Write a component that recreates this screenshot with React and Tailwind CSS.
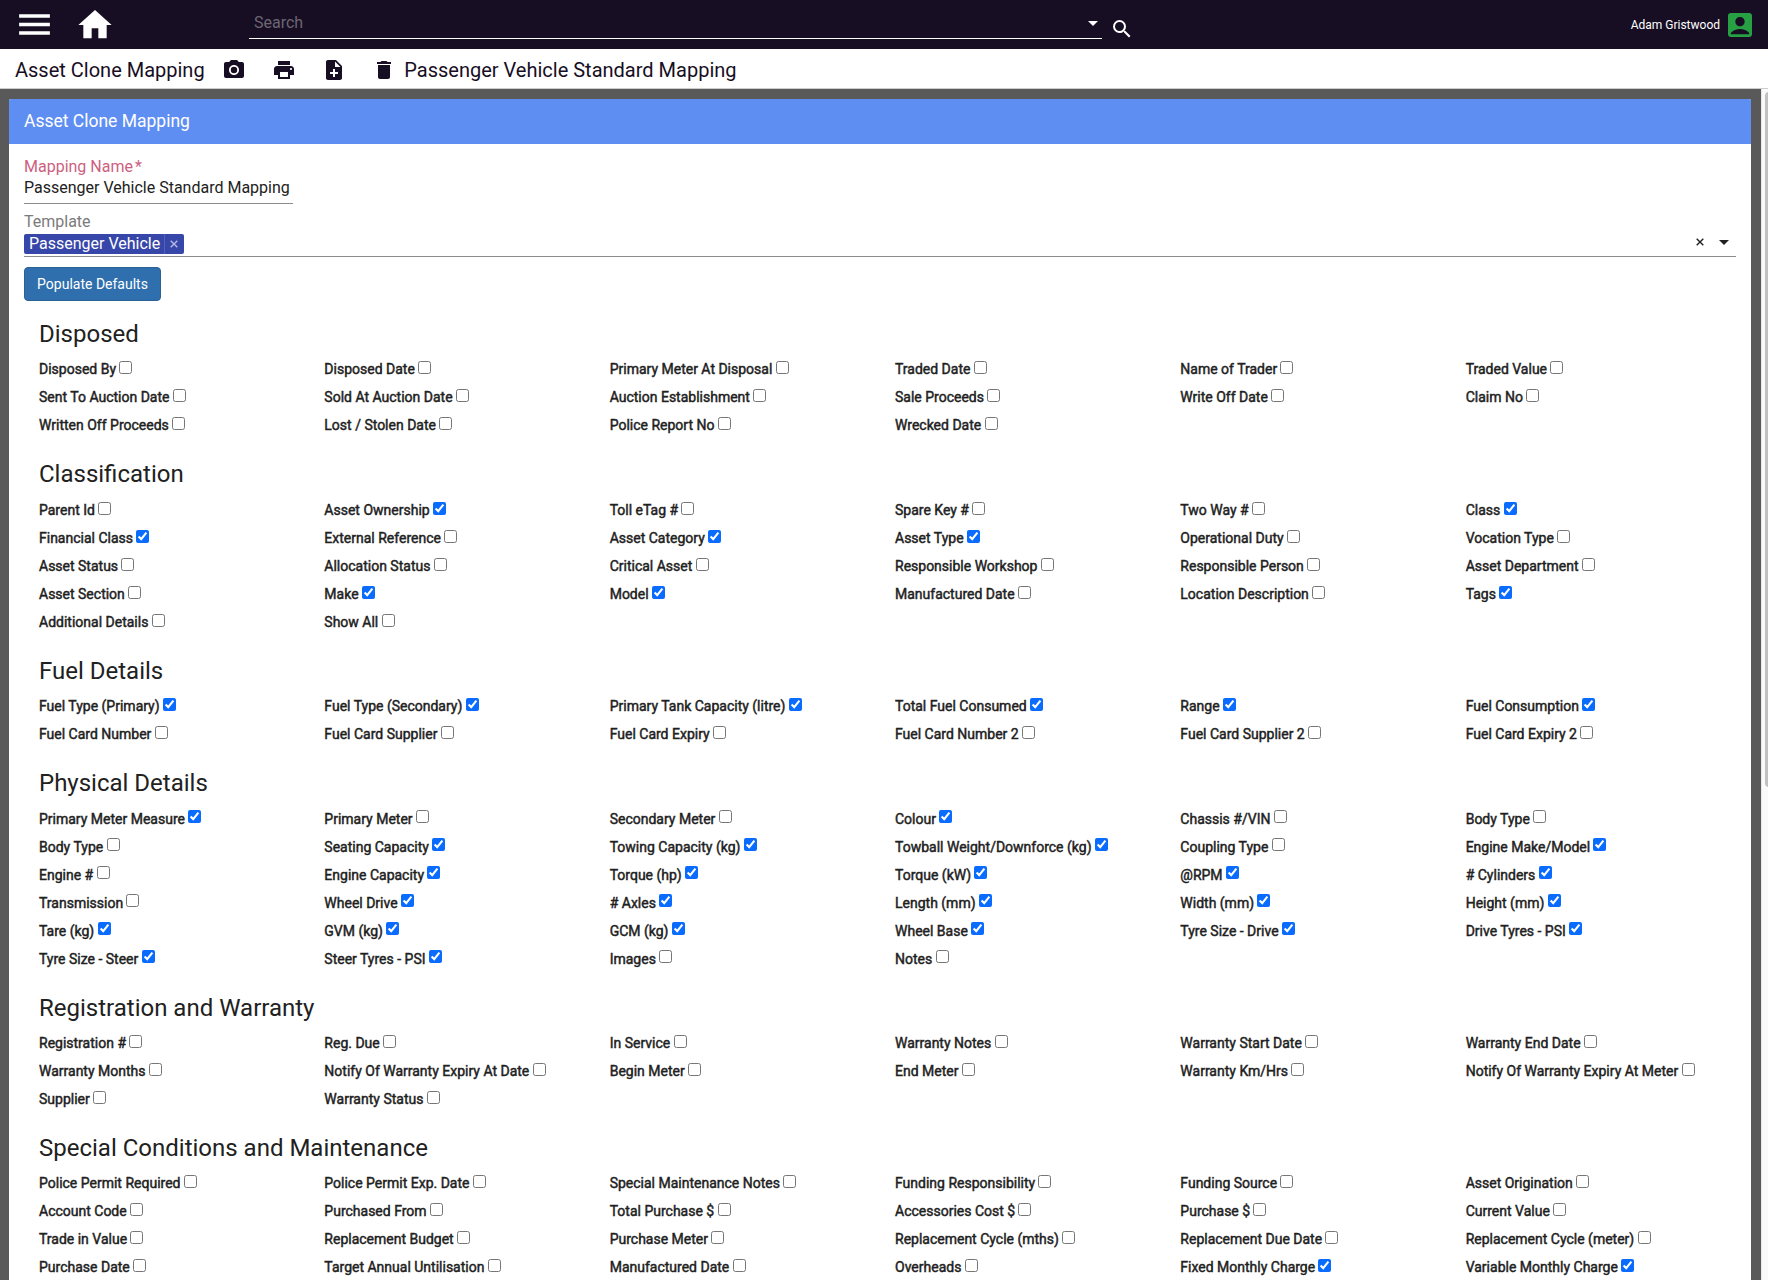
import React from "react";
import {
  MdAccountBox,
  MdDelete,
  MdHome,
  MdMenu,
  MdNoteAdd,
  MdPhotoCamera,
  MdPrint,
  MdSearch,
} from "react-icons/md";

// A trailing "*" marks a field that is copied by default.
const sections = [
  {
    title: "Disposed",
    fields: [
      "Disposed By", "Disposed Date", "Primary Meter At Disposal", "Traded Date", "Name of Trader", "Traded Value",
      "Sent To Auction Date", "Sold At Auction Date", "Auction Establishment", "Sale Proceeds", "Write Off Date", "Claim No",
      "Written Off Proceeds", "Lost / Stolen Date", "Police Report No", "Wrecked Date",
    ],
  },
  {
    title: "Classification",
    fields: [
      "Parent Id", "Asset Ownership*", "Toll eTag #", "Spare Key #", "Two Way #", "Class*",
      "Financial Class*", "External Reference", "Asset Category*", "Asset Type*", "Operational Duty", "Vocation Type",
      "Asset Status", "Allocation Status", "Critical Asset", "Responsible Workshop", "Responsible Person", "Asset Department",
      "Asset Section", "Make*", "Model*", "Manufactured Date", "Location Description", "Tags*",
      "Additional Details", "Show All",
    ],
  },
  {
    title: "Fuel Details",
    fields: [
      "Fuel Type (Primary)*", "Fuel Type (Secondary)*", "Primary Tank Capacity (litre)*", "Total Fuel Consumed*", "Range*", "Fuel Consumption*",
      "Fuel Card Number", "Fuel Card Supplier", "Fuel Card Expiry", "Fuel Card Number 2", "Fuel Card Supplier 2", "Fuel Card Expiry 2",
    ],
  },
  {
    title: "Physical Details",
    fields: [
      "Primary Meter Measure*", "Primary Meter", "Secondary Meter", "Colour*", "Chassis #/VIN", "Body Type",
      "Body Type", "Seating Capacity*", "Towing Capacity (kg)*", "Towball Weight/Downforce (kg)*", "Coupling Type", "Engine Make/Model*",
      "Engine #", "Engine Capacity*", "Torque (hp)*", "Torque (kW)*", "@RPM*", "# Cylinders*",
      "Transmission", "Wheel Drive*", "# Axles*", "Length (mm)*", "Width (mm)*", "Height (mm)*",
      "Tare (kg)*", "GVM (kg)*", "GCM (kg)*", "Wheel Base*", "Tyre Size - Drive*", "Drive Tyres - PSI*",
      "Tyre Size - Steer*", "Steer Tyres - PSI*", "Images", "Notes",
    ],
  },
  {
    title: "Registration and Warranty",
    fields: [
      "Registration #", "Reg. Due", "In Service", "Warranty Notes", "Warranty Start Date", "Warranty End Date",
      "Warranty Months", "Notify Of Warranty Expiry At Date", "Begin Meter", "End Meter", "Warranty Km/Hrs", "Notify Of Warranty Expiry At Meter",
      "Supplier", "Warranty Status",
    ],
  },
  {
    title: "Special Conditions and Maintenance",
    fields: [
      "Police Permit Required", "Police Permit Exp. Date", "Special Maintenance Notes", "Funding Responsibility", "Funding Source", "Asset Origination",
      "Account Code", "Purchased From", "Total Purchase $", "Accessories Cost $", "Purchase $", "Current Value",
      "Trade in Value", "Replacement Budget", "Purchase Meter", "Replacement Cycle (mths)", "Replacement Due Date", "Replacement Cycle (meter)",
      "Purchase Date", "Target Annual Untilisation", "Manufactured Date", "Overheads", "Fixed Monthly Charge*", "Variable Monthly Charge*",
    ],
  },
];

function Caret({ className }) {
  return (
    <svg viewBox="0 0 10 5" className={`h-[5px] w-[10px] fill-current ${className}`}>
      <path d="M0 0h10L5 5z" />
    </svg>
  );
}

function Cross({ className }) {
  return (
    <svg viewBox="0 0 8 8" className={`size-2 fill-none stroke-current ${className}`} strokeWidth="1.4">
      <path d="M.7.7l6.6 6.6M7.3.7L.7 7.3" />
    </svg>
  );
}

function TopBar() {
  return (
    <header className="flex h-[49px] shrink-0 items-center bg-[#170e23] pl-[14.2px] pr-[12px] text-white">
      <MdMenu className="size-[41px]" />
      <MdHome className="ml-[19.4px] size-10" />
      <div className="mb-[10px] ml-[134.4px] flex h-[31px] w-[853px] items-center self-end border-b border-white pl-[5px] pr-1">
        <span className="flex-1 text-base text-[#6c6674]">Search</span>
        <Caret />
      </div>
      <MdSearch className="ml-2 mt-[9px] size-6" />
      <span className="ml-auto text-xs">Adam Gristwood</span>
      <MdAccountBox className="ml-1 size-8 text-[#27a043]" />
    </header>
  );
}

function Toolbar() {
  return (
    <div className="flex h-10 shrink-0 items-center border-b border-[#cccccc] bg-white pl-[15px] pt-[2px] text-xl text-[#170e23]">
      <h1 className="w-[207.3px]">Asset Clone Mapping</h1>
      <div className="flex gap-[26px]">
        <MdPhotoCamera className="size-6" />
        <MdPrint className="size-6" />
        <MdNoteAdd className="size-6" />
        <MdDelete className="size-6" />
      </div>
      <span className="ml-2">Passenger Vehicle Standard Mapping</span>
    </div>
  );
}

function Field({ name }) {
  const checked = name.endsWith("*");
  return (
    <label className="flex h-7 items-start whitespace-nowrap pl-[15px] text-sm leading-7 [-webkit-text-stroke:0.45px_currentColor]">
      {checked ? name.slice(0, -1) : name}
      <input type="checkbox" defaultChecked={checked} className="ml-[3.3px] mt-[5.8px] size-[13px] accent-[#0a6cff]" />
    </label>
  );
}

function Section({ title, fields }) {
  return (
    <section className="pt-[17px]">
      <h2 className="mb-[3.4px] h-9 pl-[15px] text-2xl leading-9">{title}</h2>
      <div className="grid grid-cols-6">
        {fields.map((name, i) => (
          <Field key={i} name={name} />
        ))}
      </div>
    </section>
  );
}

export default function App() {
  return (
    <div className="flex h-[1280px] w-[1768px] flex-col overflow-hidden bg-white font-[Roboto,sans-serif] text-[#212121]">
      <TopBar />
      <Toolbar />
      <div className="flex min-h-0 flex-1">
        <main className="min-w-0 flex-1 overflow-hidden bg-[#595959] pl-[9px] pr-[10px] pt-[10px]">
          <div className="rounded-t-[2px] bg-white pb-8">
            <div className="h-[45px] rounded-t-[2px] bg-[#5f8ef3] pl-[15px] text-[17.5px] leading-[45px] text-white">
              Asset Clone Mapping
            </div>
            <div className="px-[15px] pt-3">
              <div className="h-12 w-[269px] border-b border-[#8c8c8c]">
                <div className="h-5 text-base leading-[22px] text-[#cc5f7f]">
                  Mapping Name<span className="ml-[2px]">*</span>
                </div>
                <div className="whitespace-nowrap text-base leading-6">Passenger Vehicle Standard Mapping</div>
              </div>
              <div className="mt-2 h-[45px] border-b border-[#8c8c8c]">
                <div className="h-[22px] text-base leading-5 text-[#7b7b7b]">Template</div>
                <div className="flex h-5 items-center">
                  <div className="flex h-5 items-center rounded-[2px] bg-[#3746a9] text-base leading-5 text-white">
                    <span className="w-[140px] whitespace-nowrap pl-[5px]">Passenger Vehicle</span>
                    <span className="flex h-5 w-5 items-center border-l border-[#5361bd] pl-[4.5px]">
                      <Cross className="text-[#b4bae2]" />
                    </span>
                  </div>
                  <Cross className="-mt-1 ml-auto" />
                  <Caret className="-mt-1 ml-[15px] mr-[7px]" />
                </div>
              </div>
              <button className="-mb-[2px] mt-[10px] block h-[34px] w-[137px] rounded border border-[#2a6294] bg-[#2f6fae] text-sm text-white">
                Populate Defaults
              </button>
              {sections.map((section) => (
                <Section key={section.title} {...section} />
              ))}
            </div>
          </div>
        </main>
        <div className="w-[7px] overflow-hidden border-l border-[#e8e8e8] bg-[#fafafa] pl-[3px] pt-[3px]">
          <div className="h-[695px] w-2 rounded-full bg-[#c1c1c1]" />
        </div>
      </div>
    </div>
  );
}
